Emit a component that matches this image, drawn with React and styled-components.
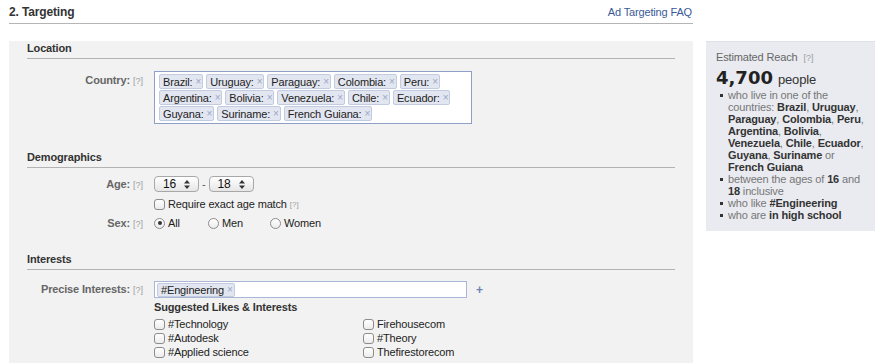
import React from "react";
import styled, { createGlobalStyle } from "styled-components";

const GlobalStyle = createGlobalStyle`
  body {
    margin: 0;
    background: #fff;
    font-family: "Liberation Sans", Arial, sans-serif;
    font-size: 11px;
    letter-spacing: -0.15px;
    color: #333;
  }
`;

const Page = styled.div`
  display: flex;
  align-items: flex-start;
  padding-left: 9px;
`;

const Main = styled.div`
  width: 684px;
`;

const Header = styled.div`
  display: flex;
  justify-content: space-between;
  align-items: center;
  height: 23px;
  border-bottom: 1px solid #b5b5b5;
`;

const Title = styled.div`
  font-size: 12px;
  font-weight: bold;
  color: #333;
`;

const FaqLink = styled.a`
  color: #3b5998;
  text-decoration: none;
  font-size: 11px;
  margin-right: 1px;
`;

const Panel = styled.div`
  background: #f2f2f2;
  padding: 0 18px 40px;
`;

const SectionTitle = styled.div`
  margin-top: ${(p) => p.$top}px;
  line-height: 14px;
  padding-bottom: 3px;
  border-bottom: 1px solid #b3b3b3;
  font-weight: bold;
  color: #333;
`;

const FieldRow = styled.div`
  display: grid;
  grid-template-columns: 127px 1fr;
  align-items: start;
  margin-top: ${(p) => p.$top || 0}px;
`;

const Label = styled.div`
  text-align: right;
  padding-right: 11px;
  padding-top: ${(p) => p.$pad || 0}px;
  line-height: ${(p) => p.$lh || 14}px;
  font-weight: bold;
  color: #666;
  white-space: nowrap;
`;

const Help = styled.span`
  font-size: 9px;
  font-weight: normal;
  color: #a0a0a0;
  margin-left: 3px;
  letter-spacing: 0;
`;

const SupHelp = styled(Help)`
  vertical-align: 3px;
  font-size: 8px;
`;

const TagBox = styled.div`
  box-sizing: border-box;
  width: 318px;
  height: 53px;
  background: #fff;
  border: 1px solid #909fc6;
  padding: 2px 4px;
  display: flex;
  flex-direction: column;
  gap: 1px;
`;

const TagLine = styled.div`
  display: flex;
  gap: 3px;
`;

const Tag = styled.span`
  display: inline-flex;
  align-items: center;
  box-sizing: border-box;
  height: ${(p) => p.$h || 15}px;
  padding: 0 1px 0 3px;
  background: #e2e6f0;
  border: 1px solid #c3cbe0;
  border-radius: 2px;
  color: #222;
  white-space: nowrap;
`;

const TagX = styled.span`
  margin-left: 3px;
  font-size: 10px;
  color: #9aa6c4;
`;

const Inline = styled.div`
  display: flex;
  align-items: center;
  height: ${(p) => p.$h || 14}px;
`;

const SelectBox = styled.div`
  box-sizing: border-box;
  width: 45px;
  height: 16px;
  display: flex;
  align-items: center;
  justify-content: space-between;
  padding: 0 8px 0 8px;
  border: 1px solid #a8a8a8;
  border-radius: 4px;
  background: linear-gradient(#ffffff, #e6e6e6);
  font-size: 12px;
  color: #111;
`;

const Dash = styled.span`
  margin: 0 3px 0 3px;
  color: #555;
`;

const Check = styled.span`
  box-sizing: border-box;
  width: 11px;
  height: 11px;
  border: 1px solid #8c8c8c;
  border-radius: 3px;
  background: linear-gradient(#ffffff, #ececec);
  margin-right: 3px;
  flex-shrink: 0;
`;

const Radio = styled.span`
  box-sizing: border-box;
  width: 11px;
  height: 11px;
  border: 1px solid #8c8c8c;
  border-radius: 50%;
  background: linear-gradient(#ffffff, #ececec);
  margin-right: 3px;
  display: flex;
  align-items: center;
  justify-content: center;
  flex-shrink: 0;

  &::after {
    content: "";
    width: 4px;
    height: 4px;
    border-radius: 50%;
    background: ${(p) => (p.$on ? "#333" : "transparent")};
  }
`;

const RadioOption = styled.label`
  display: flex;
  align-items: center;
  width: ${(p) => p.$w}px;
  color: #222;
`;

const OptionText = styled.span`
  color: #222;
`;

const InterestInput = styled.div`
  box-sizing: border-box;
  width: 313px;
  height: 17px;
  background: #fff;
  border: 1px solid #a9b6d6;
  padding: 0 2px;
  display: flex;
  align-items: center;
`;

const Plus = styled.span`
  margin-left: 9px;
  color: #6d84b4;
  font-size: 12px;
  font-weight: bold;
`;

const Suggested = styled.div`
  margin-top: 2px;
  line-height: 14px;
  font-weight: bold;
  color: #333;
`;

const SuggestGrid = styled.div`
  margin-top: 3px;
  display: grid;
  grid-template-columns: 209px 200px;
  grid-auto-rows: 14px;
`;

const Side = styled.div`
  box-sizing: border-box;
  width: 169px;
  height: 190px;
  margin: 41px 0 0 13px;
  padding: 8px 10px 0;
  background: #e9ebf0;
  border-top: 1px solid #dde1ea;
`;

const ReachLabel = styled.div`
  line-height: 14px;
  color: #666;
`;

const ReachCount = styled.div`
  margin-top: 2px;
  height: 22px;
  line-height: 22px;
  display: flex;
  align-items: baseline;
  overflow: hidden;
`;

const Big = styled.span`
  font-family: "DejaVu Sans", sans-serif;
  font-weight: bold;
  font-size: 18px;
  letter-spacing: 0;
  color: #222;
`;

const People = styled.span`
  margin-left: 5px;
  font-size: 13px;
  color: #333;
`;

const ReachList = styled.ul`
  list-style: none;
  margin: 0;
  padding: 0 0 0 4px;
`;

const ReachItem = styled.li`
  display: flex;
  line-height: 12px;
  color: #777;
  white-space: nowrap;
`;

const Bullet = styled.span`
  width: 3px;
  height: 3px;
  margin: 5px 5px 0 0;
  background: #333;
  flex-shrink: 0;
`;

const B = styled.b`
  color: #333;
`;

const countryRows = [
  ["Brazil:", "Uruguay:", "Paraguay:", "Colombia:", "Peru:"],
  ["Argentina:", "Bolivia:", "Venezuela:", "Chile:", "Ecuador:"],
  ["Guyana:", "Suriname:", "French Guiana:"],
];

const suggestions = [
  "#Technology",
  "Firehousecom",
  "#Autodesk",
  "#Theory",
  "#Applied science",
  "Thefirestorecom",
];

const Arrows = () => (
  <svg width="6" height="9" viewBox="0 0 6 9">
    <path d="M3 0 L6 3.5 L0 3.5 Z M3 9 L6 5.5 L0 5.5 Z" fill="#333" />
  </svg>
);

const Select = ({ value }) => (
  <SelectBox>
    <span>{value}</span>
    <Arrows />
  </SelectBox>
);

export default function App() {
  return (
    <>
      <GlobalStyle />
      <Page>
        <Main>
          <Header>
            <Title>2. Targeting</Title>
            <FaqLink href="#">Ad Targeting FAQ</FaqLink>
          </Header>
          <Panel>
            <SectionTitle $top={17}>Location</SectionTitle>
            <FieldRow $top={12}>
              <Label $pad={2}>
                Country:<Help>[?]</Help>
              </Label>
              <TagBox>
                {countryRows.map((row, i) => (
                  <TagLine key={i}>
                    {row.map((c) => (
                      <Tag key={c}>
                        {c}
                        <TagX>×</TagX>
                      </Tag>
                    ))}
                  </TagLine>
                ))}
              </TagBox>
            </FieldRow>

            <SectionTitle $top={26}>Demographics</SectionTitle>
            <FieldRow $top={8}>
              <Label $lh={16}>
                Age:<Help>[?]</Help>
              </Label>
              <Inline $h={16}>
                <Select value="16" />
                <Dash>-</Dash>
                <Select value="18" />
              </Inline>
            </FieldRow>
            <FieldRow $top={4}>
              <div />
              <Inline>
                <Check />
                <OptionText>Require exact age match</OptionText>
                <SupHelp>[?]</SupHelp>
              </Inline>
            </FieldRow>
            <FieldRow $top={5}>
              <Label>
                Sex:<Help>[?]</Help>
              </Label>
              <Inline>
                <RadioOption $w={54}>
                  <Radio $on />
                  All
                </RadioOption>
                <RadioOption $w={62}>
                  <Radio />
                  Men
                </RadioOption>
                <RadioOption $w={60}>
                  <Radio />
                  Women
                </RadioOption>
              </Inline>
            </FieldRow>

            <SectionTitle $top={21}>Interests</SectionTitle>
            <FieldRow $top={11}>
              <Label $lh={17}>
                Precise Interests:<Help>[?]</Help>
              </Label>
              <div>
                <Inline $h={17}>
                  <InterestInput>
                    <Tag $h={14}>
                      #Engineering
                      <TagX>×</TagX>
                    </Tag>
                  </InterestInput>
                  <Plus>+</Plus>
                </Inline>
                <Suggested>Suggested Likes &amp; Interests</Suggested>
                <SuggestGrid>
                  {suggestions.map((s) => (
                    <Inline key={s}>
                      <Check />
                      <OptionText>{s}</OptionText>
                    </Inline>
                  ))}
                </SuggestGrid>
              </div>
            </FieldRow>
          </Panel>
        </Main>

        <Side>
          <ReachLabel>
            Estimated Reach <Help>[?]</Help>
          </ReachLabel>
          <ReachCount>
            <Big>4,700</Big>
            <People>people</People>
          </ReachCount>
          <ReachList>
            <ReachItem>
              <Bullet />
              <span>
                who live in one of the
                <br />
                countries: <B>Brazil</B>, <B>Uruguay</B>,
                <br />
                <B>Paraguay</B>, <B>Colombia</B>, <B>Peru</B>,
                <br />
                <B>Argentina</B>, <B>Bolivia</B>,
                <br />
                <B>Venezuela</B>, <B>Chile</B>, <B>Ecuador</B>,
                <br />
                <B>Guyana</B>, <B>Suriname</B> or
                <br />
                <B>French Guiana</B>
              </span>
            </ReachItem>
            <ReachItem>
              <Bullet />
              <span>
                between the ages of <B>16</B> and
                <br />
                <B>18</B> inclusive
              </span>
            </ReachItem>
            <ReachItem>
              <Bullet />
              <span>
                who like <B>#Engineering</B>
              </span>
            </ReachItem>
            <ReachItem>
              <Bullet />
              <span>
                who are <B>in high school</B>
              </span>
            </ReachItem>
          </ReachList>
        </Side>
      </Page>
    </>
  );
}
